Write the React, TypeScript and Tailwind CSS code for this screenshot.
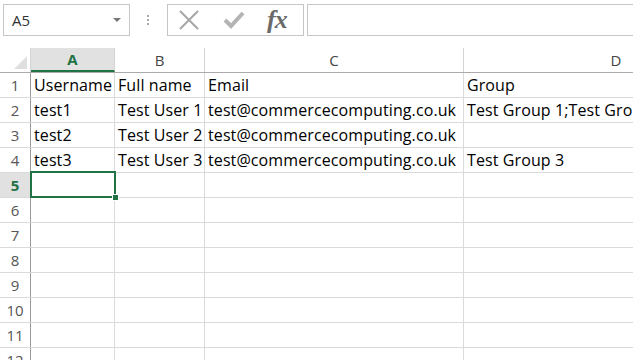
const cols = [
  { label: "A", width: "w-[84px]" },
  { label: "B", width: "w-[90px]" },
  { label: "C", width: "w-[259px]" },
  { label: "D", width: "w-[305px]" },
];

const rows: string[][] = [
  ["Username", "Full name", "Email", "Group"],
  ["test1", "Test User 1", "test@commercecomputing.co.uk", "Test Group 1;Test Group 2"],
  ["test2", "Test User 2", "test@commercecomputing.co.uk", ""],
  ["test3", "Test User 3", "test@commercecomputing.co.uk", "Test Group 3"],
  ["", "", "", ""],
  ["", "", "", ""],
  ["", "", "", ""],
  ["", "", "", ""],
  ["", "", "", ""],
  ["", "", "", ""],
  ["", "", "", ""],
  ["", "", "", ""],
];

const font = { fontFamily: '"Open Sans", "Noto Sans", sans-serif' };

export default function App() {
  return (
    <div className="w-[633px] h-[360px] overflow-hidden bg-white" style={font}>
      {/* formula bar */}
      <div className="flex items-start h-[48px] pt-[4px] pl-[3px]">
        <div className="flex items-center justify-between w-[127px] h-[32px] border border-[#c6c6c6] pl-[8px] pr-[8px]">
          <span className="text-[15px] text-[#333]">A5</span>
          <span className="w-0 h-0 border-l-[4px] border-r-[4px] border-t-[4px] border-l-transparent border-r-transparent border-t-[#777]" />
        </div>
        <div className="flex flex-col gap-[2px] ml-[17px] mt-[11px]">
          <span className="w-[2px] h-[2px] bg-[#aaa]" />
          <span className="w-[2px] h-[2px] bg-[#aaa]" />
          <span className="w-[2px] h-[2px] bg-[#aaa]" />
        </div>
        <div className="flex items-center w-[137px] h-[32px] border border-[#c6c6c6] ml-[18px]">
          <svg width="22" height="22" viewBox="0 0 22 22" className="ml-[10px]">
            <path d="M2 2 L20 20 M20 2 L2 20" stroke="#a6a6a6" strokeWidth="2" fill="none" />
          </svg>
          <svg width="22" height="20" viewBox="0 0 22 20" className="ml-[23px]">
            <path d="M2 10 L8 16 L20 3" stroke="#b4b4b4" strokeWidth="4" fill="none" />
          </svg>
          <span
            className="ml-[22px] text-[26px] italic font-bold text-[#6a6a6a] leading-none tracking-[-1px]"
            style={{ fontFamily: '"Liberation Serif", serif' }}
          >
            fx
          </span>
        </div>
        <div className="flex-1 h-[32px] border border-[#c6c6c6] ml-[3px] border-r-0" />
      </div>

      {/* column headers */}
      <div className="flex h-[25px] border-b border-[#ababab]">
        <div className="w-[31px] shrink-0 border-r border-[#d4d4d4] flex items-end justify-end pr-[3px] pb-[3px]">
          <span
            className="w-0 h-0"
            style={{ borderBottom: "13px solid #dfdfdf", borderLeft: "13px solid transparent" }}
          />
        </div>
        {cols.map((c, i) => (
          <div
            key={c.label}
            className={`${c.width} shrink-0 flex items-center justify-center border-r border-[#d4d4d4] text-[15px] ${
              i === 0
                ? "bg-[#e1e1e1] text-[#217346] font-bold border-b-2 border-b-[#217346]"
                : "text-[#444]"
            }`}
          >
            {c.label}
          </div>
        ))}
      </div>

      {/* rows */}
      {rows.map((r, ri) => (
        <div key={ri} className="flex h-[25px] border-b border-[#dadada]">
          <div
            className={`w-[31px] shrink-0 border-r border-[#9b9b9b] flex items-center justify-center text-[15px] ${
              ri === 4 ? "bg-[#e1e1e1] text-[#217346] font-bold" : "text-[#555]"
            }`}
          >
            {ri + 1}
          </div>
          {cols.map((c, ci) => (
            <div
              key={c.label}
              className={`${c.width} shrink-0 relative flex items-center border-r border-[#dadada] text-[16px] tracking-[0.1px] text-black whitespace-nowrap pl-[3px] ${
                ci === 3 ? "overflow-hidden" : ""
              }`}
            >
              {r[ci]}
              {ri === 4 && ci === 0 && (
                <div className="absolute left-[-1px] top-[-2px] w-[86px] h-[27px] border-2 border-[#217346] z-10">
                  <div className="absolute right-[-5px] bottom-[-5px] w-[7px] h-[7px] bg-[#217346] border border-white" />
                </div>
              )}
            </div>
          ))}
        </div>
      ))}
    </div>
  );
}
